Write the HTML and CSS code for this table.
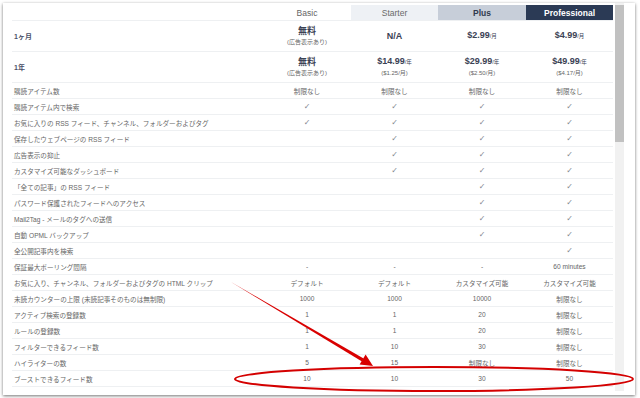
FILE: index.html
```html
<!DOCTYPE html>
<html lang="ja">
<head>
<meta charset="utf-8">
<link rel="stylesheet" href="styles.css">
</head>
<body>
<div class="frame">
  <div class="table">
    <div class="row head">
      <div class="c feat"></div>
      <div class="c hbasic">Basic</div>
      <div class="c hstarter">Starter</div>
      <div class="c hplus">Plus</div>
      <div class="c hpro">Professional</div>
    </div>
    <div class="row price">
      <div class="c feat label">1ヶ月</div>
      <div class="c"><div class="amt">無料</div><div class="note">(広告表示あり)</div></div>
      <div class="c"><div class="amt">N/A</div></div>
      <div class="c"><div class="amt">$2.99<span class="per">/月</span></div></div>
      <div class="c"><div class="amt">$4.99<span class="per">/月</span></div></div>
    </div>
    <div class="row price">
      <div class="c feat label">1年</div>
      <div class="c"><div class="amt">無料</div><div class="note">(広告表示あり)</div></div>
      <div class="c"><div class="amt">$14.99<span class="per">/年</span></div><div class="note">($1.25/月)</div></div>
      <div class="c"><div class="amt">$29.99<span class="per">/年</span></div><div class="note">($2.50/月)</div></div>
      <div class="c"><div class="amt">$49.99<span class="per">/年</span></div><div class="note">($4.17/月)</div></div>
    </div>
    <div class="row"><div class="c feat">購読アイテム数</div><div class="c">制限なし</div><div class="c">制限なし</div><div class="c">制限なし</div><div class="c">制限なし</div></div>
    <div class="row"><div class="c feat">購読アイテム内で検索</div><div class="c ck">✓</div><div class="c ck">✓</div><div class="c ck">✓</div><div class="c ck">✓</div></div>
    <div class="row"><div class="c feat">お気に入りの RSS フィード、チャンネル、フォルダーおよびタグ</div><div class="c ck">✓</div><div class="c ck">✓</div><div class="c ck">✓</div><div class="c ck">✓</div></div>
    <div class="row"><div class="c feat">保存したウェブページの RSS フィード</div><div class="c"></div><div class="c ck">✓</div><div class="c ck">✓</div><div class="c ck">✓</div></div>
    <div class="row"><div class="c feat">広告表示の抑止</div><div class="c"></div><div class="c ck">✓</div><div class="c ck">✓</div><div class="c ck">✓</div></div>
    <div class="row"><div class="c feat">カスタマイズ可能なダッシュボード</div><div class="c"></div><div class="c ck">✓</div><div class="c ck">✓</div><div class="c ck">✓</div></div>
    <div class="row"><div class="c feat">「全ての記事」の RSS フィード</div><div class="c"></div><div class="c"></div><div class="c ck">✓</div><div class="c ck">✓</div></div>
    <div class="row"><div class="c feat">パスワード保護されたフィードへのアクセス</div><div class="c"></div><div class="c"></div><div class="c ck">✓</div><div class="c ck">✓</div></div>
    <div class="row"><div class="c feat">Mail2Tag - メールのタグへの送信</div><div class="c"></div><div class="c"></div><div class="c ck">✓</div><div class="c ck">✓</div></div>
    <div class="row"><div class="c feat">自動 OPML バックアップ</div><div class="c"></div><div class="c"></div><div class="c ck">✓</div><div class="c ck">✓</div></div>
    <div class="row"><div class="c feat">全公開記事内を検索</div><div class="c"></div><div class="c"></div><div class="c"></div><div class="c ck">✓</div></div>
    <div class="row"><div class="c feat">保証最大ポーリング間隔</div><div class="c">-</div><div class="c">-</div><div class="c">-</div><div class="c">60 minutes</div></div>
    <div class="row"><div class="c feat">お気に入り、チャンネル、フォルダーおよびタグの HTML クリップ</div><div class="c">デフォルト</div><div class="c">デフォルト</div><div class="c">カスタマイズ可能</div><div class="c">カスタマイズ可能</div></div>
    <div class="row"><div class="c feat">未読カウンターの上限 (未読記事そのものは無制限)</div><div class="c">1000</div><div class="c">1000</div><div class="c">10000</div><div class="c">制限なし</div></div>
    <div class="row"><div class="c feat">アクティブ検索の登録数</div><div class="c">1</div><div class="c">1</div><div class="c">20</div><div class="c">制限なし</div></div>
    <div class="row"><div class="c feat">ルールの登録数</div><div class="c">1</div><div class="c">1</div><div class="c">20</div><div class="c">制限なし</div></div>
    <div class="row"><div class="c feat">フィルターできるフィード数</div><div class="c">1</div><div class="c">10</div><div class="c">30</div><div class="c">制限なし</div></div>
    <div class="row"><div class="c feat">ハイライターの数</div><div class="c">5</div><div class="c">15</div><div class="c">制限なし</div><div class="c">制限なし</div></div>
    <div class="row"><div class="c feat">ブーストできるフィード数</div><div class="c">10</div><div class="c">10</div><div class="c">30</div><div class="c">50</div></div>
  </div>
  <div class="scrollbar"><div class="thumb"></div></div>
</div>
<svg class="annot" width="640" height="398" viewBox="0 0 640 398">
  <polygon points="231,282 362,361.4 363.6,358.6" fill="#d90000"/>
  <polygon points="373,366 359.6,364.6 365.6,354.6" fill="#d90000"/>
  <ellipse cx="434" cy="379" rx="199" ry="12" fill="none" stroke="#d40000" stroke-width="2"/>
</svg>
</body>
</html>
```

FILE: styles.css
```css
html, body {
  margin: 0;
  padding: 0;
  background: #ffffff;
}
body {
  width: 640px;
  height: 398px;
  overflow: hidden;
  position: relative;
  font-family: "Liberation Sans", "Noto Sans CJK JP", sans-serif;
  color: #666;
}
.frame {
  margin: 3px 0 0 3px;
  width: 632px;
  height: 392px;
  box-sizing: border-box;
  background: #fff;
  box-shadow: 0 1px 3px rgba(0,0,0,0.55);
  display: flex;
  overflow: hidden;
}
.table {
  padding: 2px 0 0 9px;
  width: 601px;
  flex: none;
}
.row {
  display: grid;
  grid-template-columns: 251px 88px 87px 88px 87px;
  height: 16px;
  box-sizing: border-box;
  border-bottom: 1px solid #eef0f2;
  font-size: 6.6px;
}
.row.price {
  height: 31px;
}
.c {
  display: flex;
  flex-direction: column;
  align-items: center;
  justify-content: center;
  white-space: nowrap;
  color: #666;
}
.c.feat {
  align-items: flex-start;
  padding-left: 2px;
  color: #666;
}
.c.label {
  font-weight: bold;
  font-size: 7px;
  color: #4a5068;
}
.head .c {
  font-size: 8.5px;
}
.hbasic { color: #666; }
.hstarter { background: #eef1f5; color: #6a6a6a; }
.hplus { background: #c7ced9; color: #2f3a4f; font-weight: bold; }
.hpro { background: #2b3a55; color: #ffffff; font-weight: bold; }
.amt {
  font-weight: bold;
  font-size: 9px;
  color: #3b4254;
  line-height: 11px;
}
.per {
  font-weight: normal;
  font-size: 5.5px;
}
.note {
  font-size: 6px;
  color: #666;
  line-height: 9px;
  margin-top: 1px;
}
.ck {
  font-family: "DejaVu Sans", sans-serif;
  font-size: 8px;
  color: #80858e;
}
.scrollbar {
  margin-left: 2px;
  width: 9px;
  height: 388px;
  background: #f1f1f1;
  flex: none;
}
.thumb {
  margin-top: 2px;
  height: 137px;
  background: #c1c1c1;
}
.annot {
  position: absolute;
  left: 0;
  top: 0;
  pointer-events: none;
}
```
